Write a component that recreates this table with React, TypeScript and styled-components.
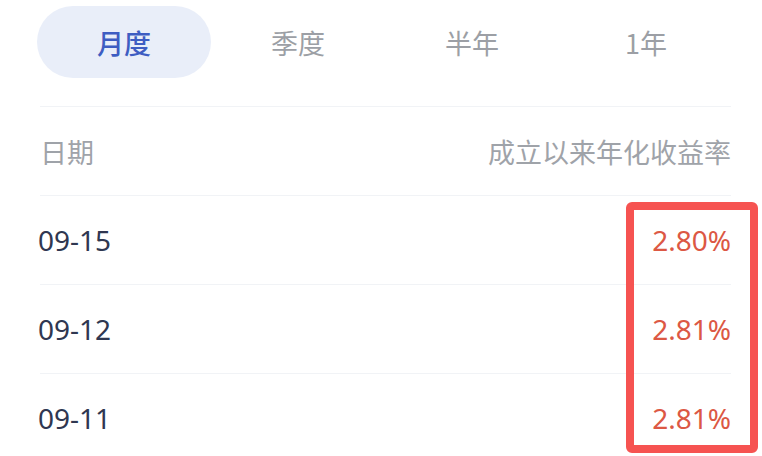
import React, { useState } from "react";
import styled, { createGlobalStyle } from "styled-components";

const Global = createGlobalStyle`
  html, body { margin: 0; padding: 0; background: #ffffff; }
  body { font-family: "Noto Sans", "Noto Sans CJK SC", sans-serif; }
`;

const Page = styled.div`
  width: 762px;
  height: 456px;
  overflow: hidden;
  box-sizing: border-box;
  padding: 6px 31px 0 40px;
  background: #ffffff;
`;

const TabBar = styled.div`
  padding-bottom: 28px;
  border-bottom: 1px solid #f1f3f6;
`;

const Tabs = styled.div`
  display: grid;
  grid-template-columns: repeat(4, 1fr);
  margin: 0 -2px 0 -3px;
`;

const Tab = styled.div<{ $active?: boolean }>`
  height: 72px;
  display: flex;
  align-items: center;
  justify-content: center;
  border-radius: 36px;
  font-size: 27px;
  font-family: "Noto Sans CJK SC", "Noto Sans", sans-serif;
  font-weight: ${(p) => (p.$active ? 500 : 400)};
  color: ${(p) => (p.$active ? "#3e5dc2" : "#9c9fa5")};
  background: ${(p) => (p.$active ? "#e9eef9" : "transparent")};
  cursor: pointer;
`;

const Table = styled.div`
  position: relative;
`;

const Row = styled.div`
  height: 88px;
  display: flex;
  align-items: center;
  justify-content: space-between;
  border-bottom: 1px solid #f1f3f6;
`;

const HeadCell = styled.span`
  color: #9fa3a9;
  font-size: 27px;
  font-family: "Noto Sans CJK SC", "Noto Sans", sans-serif;
`;

const DateCell = styled.span`
  color: #2f3751;
  font-size: 28px;
  margin-left: -2px;
`;

const ValueCell = styled.span`
  color: #dc5844;
  font-size: 28px;
`;

const Highlight = styled.div`
  position: absolute;
  left: 586px;
  top: 95px;
  width: 132px;
  height: 251px;
  box-sizing: border-box;
  border: 8px solid #f65351;
  border-radius: 6px;
  pointer-events: none;
`;

const tabs = ["月度", "季度", "半年", "1年"];
const rows = [
  { date: "09-15", value: "2.80%" },
  { date: "09-12", value: "2.81%" },
  { date: "09-11", value: "2.81%" },
];

export default function App() {
  const [active, setActive] = useState(0);
  return (
    <>
      <Global />
      <Page>
        <TabBar>
          <Tabs>
            {tabs.map((t, i) => (
              <Tab key={t} $active={i === active} onClick={() => setActive(i)}>
                {t}
              </Tab>
            ))}
          </Tabs>
        </TabBar>
        <Table>
          <Row>
            <HeadCell>日期</HeadCell>
            <HeadCell>成立以来年化收益率</HeadCell>
          </Row>
          {rows.map((r) => (
            <Row key={r.date}>
              <DateCell>{r.date}</DateCell>
              <ValueCell>{r.value}</ValueCell>
            </Row>
          ))}
          <Highlight />
        </Table>
      </Page>
    </>
  );
}
